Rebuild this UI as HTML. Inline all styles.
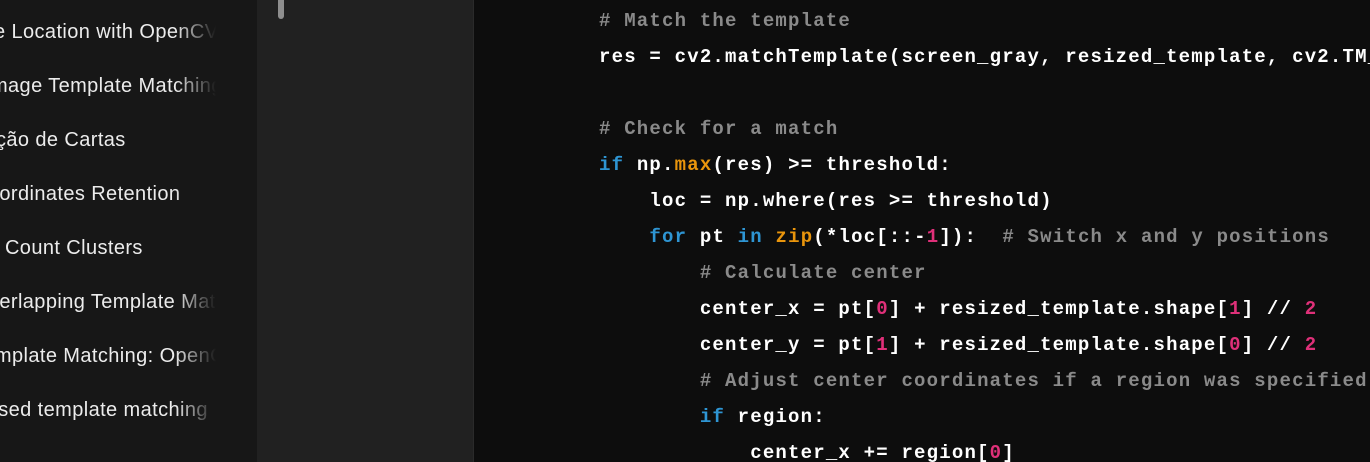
<!DOCTYPE html><html><head><style>
html,body{margin:0;width:1370px;height:462px;overflow:hidden}
body{background:#0d0d0d;position:relative}
#sb{position:absolute;left:0;top:0;width:257px;height:462px;background:#171717;overflow:hidden}
.it{position:absolute;height:30px;line-height:30px;font:20px "Liberation Sans",sans-serif;letter-spacing:0.4px;color:#ececec;white-space:nowrap;overflow:hidden;left:0;width:216px;
-webkit-mask-image:linear-gradient(90deg,#000 175px,transparent 216px);mask-image:linear-gradient(90deg,#000 175px,transparent 216px)}
.it span{position:absolute;top:0}
#mid{position:absolute;left:257px;top:0;width:216px;height:462px;background:#212121;border-right:1px solid #2a2a2a}
#scroll{position:absolute;left:278px;top:0;width:6px;height:19px;background:#8e8e8e;border-radius:0 0 3px 3px}
#cw{position:absolute;left:474px;top:0;width:896px;height:462px;overflow:hidden}
#code{position:absolute;left:125px;top:3px;font:bold 19px/36px "Liberation Mono",monospace;color:#fff;white-space:pre;letter-spacing:1.2px}
.c{color:#8a8a8a}.k{color:#2e95d3}.f{color:#e9950c}.n{color:#df3079}
</style></head><body>
<div id="sb">
<div class="it" style="top:21px"><span style="left:-6px">e Location with OpenCV</span></div>
<div class="it" style="top:75px"><span style="left:-15px">Image Template Matching</span></div>
<div class="it" style="top:129px"><span style="left:-4px">ção de Cartas</span></div>
<div class="it" style="top:183px"><span style="left:-27px">Coordinates Retention</span></div>
<div class="it" style="top:237px"><span style="left:-1px">&nbsp;Count Clusters</span></div>
<div class="it" style="top:291px"><span style="left:-27px">Overlapping Template Matching</span></div>
<div class="it" style="top:345px"><span style="left:-27px">Template Matching: OpenCV</span></div>
<div class="it" style="top:399px"><span style="left:-27px">Based template matching</span></div>
</div>
<div id="mid"></div><div id="scroll"></div>
<div id="cw"><div id="code"><span class="c"># Match the template</span>
res = cv2.matchTemplate(screen_gray, resized_template, cv2.TM_CCOEFF_NORMED)

<span class="c"># Check for a match</span>
<span class="k">if</span> np.<span class="f">max</span>(res) &gt;= threshold:
    loc = np.where(res &gt;= threshold)
    <span class="k">for</span> pt <span class="k">in</span> <span class="f">zip</span>(*loc[::-<span class="n">1</span>]):  <span class="c"># Switch x and y positions</span>
        <span class="c"># Calculate center</span>
        center_x = pt[<span class="n">0</span>] + resized_template.shape[<span class="n">1</span>] // <span class="n">2</span>
        center_y = pt[<span class="n">1</span>] + resized_template.shape[<span class="n">0</span>] // <span class="n">2</span>
        <span class="c"># Adjust center coordinates if a region was specified</span>
        <span class="k">if</span> region:
            center_x += region[<span class="n">0</span>]</div></div>
</body></html>
